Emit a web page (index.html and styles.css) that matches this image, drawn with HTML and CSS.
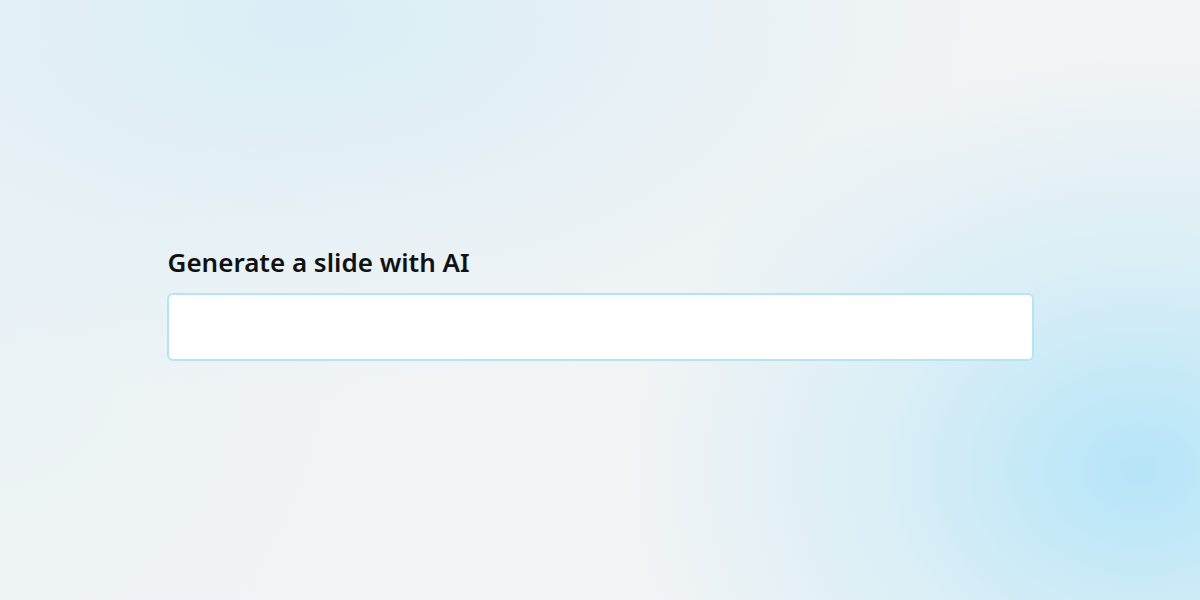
FILE: index.html
```html
<!DOCTYPE html>
<html lang="en">
<head>
<meta charset="utf-8">
<title>Generate a slide with AI</title>
<link rel="stylesheet" href="styles.css">
</head>
<body>
<main class="page">
  <section class="prompt">
    <label class="prompt-label" for="prompt-input">Generate a slide with AI</label>
    <input class="prompt-input" id="prompt-input" type="text">
  </section>
</main>
</body>
</html>
```
FILE: styles.css
```css
html, body {
  margin: 0;
  padding: 0;
  height: 100%;
}
body {
  font-family: "Noto Sans", "Open Sans", sans-serif;
  background-color: #f2f4f5;
  background-image:
    radial-gradient(ellipse 520px 420px at 1140px 470px, rgba(178, 228, 248, 0.95), rgba(190, 232, 248, 0.45) 50%, rgba(200, 235, 248, 0) 100%),
    radial-gradient(ellipse 700px 380px at 300px 20px, rgba(216, 237, 246, 0.95), rgba(222, 239, 246, 0.5) 55%, rgba(222, 239, 246, 0) 100%),
    radial-gradient(ellipse 400px 450px at 0px 350px, rgba(232, 242, 246, 0.8), rgba(232, 242, 246, 0) 100%);
  background-repeat: no-repeat;
}
.page {
  height: 600px;
  display: flex;
  justify-content: center;
  padding-top: 243px;
  box-sizing: border-box;
}
.prompt {
  width: 867px;
  display: flex;
  flex-direction: column;
  gap: 12px;
}
.prompt-label {
  font-size: 26px;
  font-weight: 600;
  color: #111;
  padding-left: 1px;
  line-height: 38px;
}
.prompt-input {
  box-sizing: border-box;
  width: 867px;
  height: 68px;
  border: 2px solid #b2e6f5;
  border-radius: 6px;
  background: #fff;
  outline: none;
  font-family: inherit;
  font-size: 18px;
  padding: 0 16px;
}
```
